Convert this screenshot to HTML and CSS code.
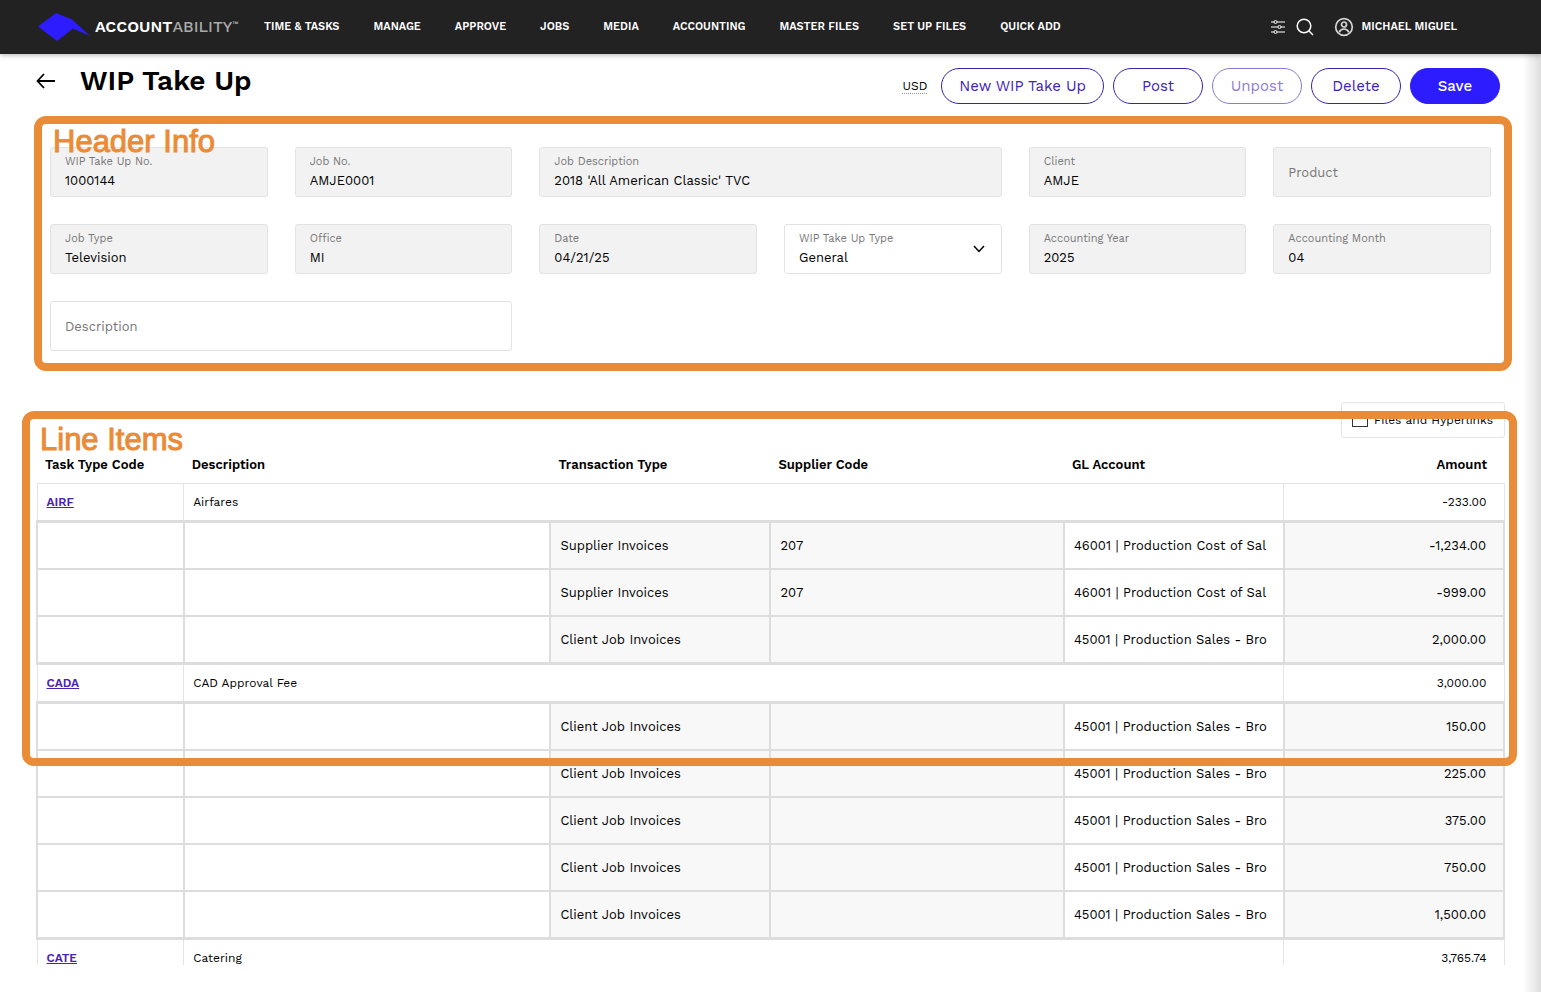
FILE: index.html
```html
<!DOCTYPE html>
<html lang="en">
<head>
  <meta charset="UTF-8" />
  <meta name="viewport" content="width=device-width, initial-scale=1.0" />
  <title>WIP Take Up</title>
  <link rel="stylesheet" href="styles.css">
</head>
<body>
  <!-- Top Bar -->
  <header class="topbar">
    <a class="logo" href="#">
      <svg width="54" height="30" viewBox="0 0 54 30" aria-hidden="true">
        <path d="M1 14.500 L19 1 L35 7.500 L53 24 L36 16.500 L20 29 Z" fill="#2c1cff"/>
      </svg>
      <span class="logo-text">ACCOUNT<span class="logo-light">ABILITY</span><sup>™</sup></span>
    </a>
    <nav class="nav">
      <a href="#">TIME &amp; TASKS</a>
      <a href="#">MANAGE</a>
      <a href="#">APPROVE</a>
      <a href="#">JOBS</a>
      <a href="#">MEDIA</a>
      <a href="#">ACCOUNTING</a>
      <a href="#">MASTER FILES</a>
      <a href="#">SET UP FILES</a>
      <a href="#">QUICK ADD</a>
    </nav>
    <div class="tools">
      <button class="icon-btn" aria-label="Filters">
        <svg width="16" height="16" viewBox="0 0 16 16" fill="none" stroke="#fff">
          <path d="M1 3h3M7 3h8M1 8h7M11 8h4M1 13h3M7 13h8"/>
          <circle cx="5.500" cy="3" r="1.500"/>
          <circle cx="9.500" cy="8" r="1.500"/>
          <circle cx="5.500" cy="13" r="1.500"/>
        </svg>
      </button>
      <button class="icon-btn" aria-label="Search">
        <svg width="18" height="18" viewBox="0 0 18 18" fill="none" stroke="#fff" stroke-width="1.500">
          <circle cx="8" cy="8" r="6.800"/>
          <path d="M12.800 12.800 L17 17"/>
        </svg>
      </button>
      <a class="user" href="#">
        <svg width="20" height="20" viewBox="0 0 20 20" fill="none" stroke="#d4d4d4" stroke-width="1.700">
          <circle cx="10" cy="10" r="8.300"/>
          <circle cx="10" cy="7.500" r="2.500"/>
          <path d="M5.300 15.200 C6.200 12.600 8 12 10 12 C12 12 13.800 12.600 14.700 15.200"/>
        </svg>
        MICHAEL MIGUEL
      </a>
    </div>
  </header>

  <main class="page">
    <!-- Title and actions -->
    <div class="title-row">
      <a class="back" href="#" aria-label="Back">
        <svg width="20" height="16" viewBox="0 0 20 16" fill="none" stroke="#000" stroke-width="1.800">
          <path d="M8 1 L1.500 8 L8 15 M1.500 8 H19"/>
        </svg>
      </a>
      <h1>WIP Take Up</h1>
      <div class="actions">
        <span class="currency">USD</span>
        <button class="btn">New WIP Take Up</button>
        <button class="btn">Post</button>
        <button class="btn" disabled>Unpost</button>
        <button class="btn">Delete</button>
        <button class="btn primary">Save</button>
      </div>
    </div>

    <!-- Header Info -->
    <section class="header-info">
      <h2 class="note">Header Info</h2>
      <div class="fields">
        <div class="field readonly">
          <label for="takeUpNo">WIP Take Up No.</label>
          <input id="takeUpNo" value="1000144" readonly>
        </div>
        <div class="field readonly">
          <label for="jobNo">Job No.</label>
          <input id="jobNo" value="AMJE0001" readonly>
        </div>
        <div class="field readonly wide">
          <label for="jobDesc">Job Description</label>
          <input id="jobDesc" value="2018 'All American Classic' TVC" readonly>
        </div>
        <div class="field readonly">
          <label for="client">Client</label>
          <input id="client" value="AMJE" readonly>
        </div>
        <div class="field readonly">
          <input id="product" placeholder="Product" aria-label="Product" readonly>
        </div>
        <div class="field readonly">
          <label for="jobType">Job Type</label>
          <input id="jobType" value="Television" readonly>
        </div>
        <div class="field readonly">
          <label for="office">Office</label>
          <input id="office" value="MI" readonly>
        </div>
        <div class="field readonly">
          <label for="date">Date</label>
          <input id="date" value="04/21/25" readonly>
        </div>
        <div class="field">
          <label for="takeUpType">WIP Take Up Type</label>
          <select id="takeUpType">
            <option>General</option>
          </select>
          <svg class="chevron" width="12" height="8" viewBox="0 0 12 8" fill="none" stroke="#000" stroke-width="1.500">
            <path d="M1 1 L6 6.500 L11 1"/>
          </svg>
        </div>
        <div class="field readonly">
          <label for="year">Accounting Year</label>
          <input id="year" value="2025" readonly>
        </div>
        <div class="field readonly">
          <label for="month">Accounting Month</label>
          <input id="month" value="04" readonly>
        </div>
        <div class="field wide">
          <input id="description" placeholder="Description" aria-label="Description">
        </div>
      </div>
    </section>

    <!-- Line Items -->
    <section class="line-items">
      <label class="files-toggle">
        <input type="checkbox">
        Files and Hyperlinks
      </label>
      <div class="table-wrap">
        <table>
          <colgroup>
            <col class="c-code"><col class="c-desc"><col class="c-type"><col class="c-supplier"><col class="c-gl"><col class="c-amount">
          </colgroup>
          <thead>
            <tr>
              <th>Task Type Code</th>
              <th>Description</th>
              <th>Transaction Type</th>
              <th>Supplier Code</th>
              <th>GL Account</th>
              <th class="amount">Amount</th>
            </tr>
          </thead>
          <tbody>
            <tr class="group">
              <td><a href="#">AIRF</a></td>
              <td colspan="4">Airfares</td>
              <td class="amount">-233.00</td>
            </tr>
            <tr class="detail">
              <td></td><td></td>
              <td class="locked">Supplier Invoices</td>
              <td class="locked">207</td>
              <td><input aria-label="GL Account" value="46001 | Production Cost of Sal"></td>
              <td class="locked amount">-1,234.00</td>
            </tr>
            <tr class="detail">
              <td></td><td></td>
              <td class="locked">Supplier Invoices</td>
              <td class="locked">207</td>
              <td><input aria-label="GL Account" value="46001 | Production Cost of Sal"></td>
              <td class="locked amount">-999.00</td>
            </tr>
            <tr class="detail">
              <td></td><td></td>
              <td class="locked">Client Job Invoices</td>
              <td class="locked"></td>
              <td><input aria-label="GL Account" value="45001 | Production Sales - Bro"></td>
              <td class="locked amount">2,000.00</td>
            </tr>
            <tr class="group">
              <td><a href="#">CADA</a></td>
              <td colspan="4">CAD Approval Fee</td>
              <td class="amount">3,000.00</td>
            </tr>
            <tr class="detail">
              <td></td><td></td>
              <td class="locked">Client Job Invoices</td>
              <td class="locked"></td>
              <td><input aria-label="GL Account" value="45001 | Production Sales - Bro"></td>
              <td class="locked amount">150.00</td>
            </tr>
            <tr class="detail">
              <td></td><td></td>
              <td class="locked">Client Job Invoices</td>
              <td class="locked"></td>
              <td><input aria-label="GL Account" value="45001 | Production Sales - Bro"></td>
              <td class="locked amount">225.00</td>
            </tr>
            <tr class="detail">
              <td></td><td></td>
              <td class="locked">Client Job Invoices</td>
              <td class="locked"></td>
              <td><input aria-label="GL Account" value="45001 | Production Sales - Bro"></td>
              <td class="locked amount">375.00</td>
            </tr>
            <tr class="detail">
              <td></td><td></td>
              <td class="locked">Client Job Invoices</td>
              <td class="locked"></td>
              <td><input aria-label="GL Account" value="45001 | Production Sales - Bro"></td>
              <td class="locked amount">750.00</td>
            </tr>
            <tr class="detail">
              <td></td><td></td>
              <td class="locked">Client Job Invoices</td>
              <td class="locked"></td>
              <td><input aria-label="GL Account" value="45001 | Production Sales - Bro"></td>
              <td class="locked amount">1,500.00</td>
            </tr>
            <tr class="group">
              <td><a href="#">CATE</a></td>
              <td colspan="4">Catering</td>
              <td class="amount">3,765.74</td>
            </tr>
          </tbody>
        </table>
      </div>
      <div class="callout">
        <h2 class="note">Line Items</h2>
      </div>
    </section>
  </main>
</body>
</html>
```

FILE: styles.css
```css
/* Global Reset & Base Styles */
* {
  margin: 0;
  padding: 0;
  box-sizing: border-box;
}
body {
  height: 100vh;
  display: flex;
  flex-direction: column;
  font-family: 'Work Sans', Inter, sans-serif;
  font-size: 13px;
  color: #000;
  background: #fff;
  overflow: hidden;
}
button, input, select {
  font: inherit;
  color: inherit;
}
a {
  color: inherit;
  text-decoration: none;
}
svg {
  display: block;
}
/* Top Bar */
.topbar {
  flex: none;
  height: 54px;
  display: flex;
  align-items: center;
  padding: 0 84px 1px 37px;
  background: #222;
  color: #fff;
  font-size: 11px;
  font-weight: 600;
  box-shadow: 0 1px 5px rgba(0, 0, 0, 0.3);
  z-index: 2;
}
.logo {
  display: flex;
  align-items: center;
  gap: 4px;
  width: 227px;
}
.logo-text {
  font-size: 16px;
  white-space: nowrap;
}
.logo-light {
  color: #aaa;
  font-weight: 500;
}
.logo sup {
  color: #aaa;
  font-size: 7px;
  vertical-align: 6px;
  line-height: 1;
}
.nav {
  display: flex;
  gap: 34px;
  white-space: nowrap;
}
.tools {
  display: flex;
  align-items: center;
  gap: 10px;
  margin-left: auto;
}
.icon-btn {
  border: 0;
  background: none;
  cursor: pointer;
}
.user {
  display: flex;
  align-items: center;
  gap: 8px;
  margin-left: 10px;
  white-space: nowrap;
}
/* Page */
.page {
  flex: 1;
  min-height: 0;
  display: flex;
  flex-direction: column;
  padding: 14px 0 27px;
  background: linear-gradient(to left, #dedede, #fff 18px);
}
.title-row {
  display: flex;
  align-items: flex-start;
  padding: 0 41px 0 36px;
}
.back {
  padding-top: 5px;
}
h1 {
  margin-left: 24px;
  font-size: 28px;
  font-weight: 600;
  line-height: 26px;
}
.actions {
  display: flex;
  align-items: center;
  gap: 9px;
  margin-left: auto;
}
.currency {
  margin-right: 5px;
  border-bottom: 1px dotted #999;
  font-size: 12px;
}
.btn {
  height: 36px;
  min-width: 90px;
  padding: 0 17px;
  border: 1px solid #3a22b0;
  border-radius: 18px;
  background: #fff;
  color: #3d22b8;
  font-size: 15px;
  cursor: pointer;
}
.btn:disabled {
  opacity: 0.6;
}
.btn.primary {
  border-color: #2c1cff;
  background: #2c1cff;
  color: #fff;
  font-weight: 500;
}
/* Orange annotation */
.header-info,
.callout {
  border: 8px solid #ea8b37;
  border-radius: 12px;
}
.note {
  position: absolute;
  top: 0;
  z-index: 1;
  color: #ea8b37;
  font-family: 'Liberation Sans', Arial, sans-serif;
  font-size: 31px;
  font-weight: 400;
  line-height: 36px;
  -webkit-text-stroke: 1px #ea8b37;
  pointer-events: none;
}
/* Header Info */
.header-info {
  position: relative;
  margin: 12px 29px 0 34px;
  padding: 23px 13px 12px 8px;
}
.header-info .note {
  left: 11px;
}
.fields {
  display: grid;
  grid-template-columns: repeat(6, 1fr);
  gap: 27px;
}
.field {
  position: relative;
  height: 50px;
  display: flex;
  flex-direction: column;
  justify-content: center;
  gap: 3px;
  padding: 0 14px;
  border: 1px solid #e2e2e2;
  border-radius: 3px;
  background: #fff;
}
.field.readonly {
  background: #f2f2f2;
}
.field.wide {
  grid-column: span 2;
}
.field label {
  color: #777;
  font-size: 11px;
  line-height: 14px;
}
.field input,
.field select {
  width: 100%;
  height: 18px;
  border: 0;
  outline: 0;
  background: transparent;
  appearance: none;
}
.field input::placeholder {
  color: #777;
}
.chevron {
  position: absolute;
  right: 16px;
  top: 20px;
  pointer-events: none;
}
/* Line Items */
.line-items {
  position: relative;
  flex: 1;
  min-height: 0;
  display: flex;
  flex-direction: column;
  margin: 31px 36px 0;
}
.files-toggle {
  align-self: flex-end;
  height: 36px;
  display: flex;
  align-items: center;
  gap: 6px;
  padding: 0 11px 0 10px;
  border: 1px solid #e4e4e4;
  border-radius: 3px;
  font-size: 12px;
}
.files-toggle input {
  width: 16px;
  height: 14px;
  border: 1px solid #333;
  appearance: none;
}
.table-wrap {
  flex: 1;
  min-height: 0;
  margin-top: 8px;
  overflow: hidden;
}
table {
  width: 100%;
  table-layout: fixed;
  border-collapse: collapse;
}
.c-code { width: 10%; }
.c-desc { width: 25%; }
.c-type { width: 15%; }
.c-supplier { width: 20%; }
.c-gl { width: 15%; }
.c-amount { width: 15%; }
th {
  height: 37px;
  padding: 0 8px;
  font-weight: 600;
  text-align: left;
}
td {
  padding: 0 9px;
}
th.amount,
td.amount {
  padding-right: 17px;
  text-align: right;
}
.group td {
  height: 38px;
  border: 1px solid #e4e4e4;
  font-size: 12px;
}
.group a {
  color: #4a22b0;
  font-weight: 600;
  text-decoration: underline;
}
.detail td {
  height: 47px;
  border: 2px solid #ddd;
  background: #fff;
}
.group + .detail td {
  height: 48px;
  border-top-width: 3px;
}
.detail + .group td {
  height: 39px;
  border-top: 3px solid #ddd;
}
.detail .locked {
  background: #f8f8f8;
}
.detail input {
  width: 100%;
  border: 0;
  outline: 0;
  background: transparent;
}
/* Frame drawn over the table */
.callout {
  position: absolute;
  top: 9px;
  left: -14px;
  right: -12px;
  height: 355px;
  pointer-events: none;
}
.callout .note {
  left: 10px;
  top: 3px;
}
```
